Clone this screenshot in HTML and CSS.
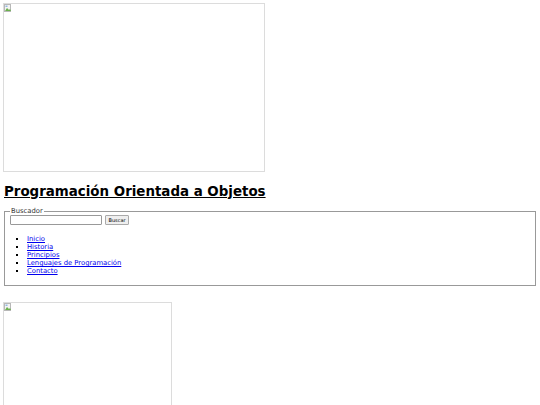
FILE: index.html
```
<!DOCTYPE html>
<html lang="es">
<head>
    <meta charset="UTF-8">
    <meta name="viewport" content="width=device-width, initial-scale=1.0">
    <title>Programación Orientada a Objetos</title>
    <link rel="stylesheet" href="styles.css">
</head>
<body>

<div class="picture banner">
    <svg class="broken" width="8" height="8" viewBox="0 0 8 8">
        <rect x="0.5" y="0.5" width="6" height="7" fill="#f4f4f4" stroke="#b8b8b8"/>
        <path d="M1 7 L3 4 L5 6 L6 5 L7 7 Z" fill="#6ab04c"/>
        <rect x="1.5" y="1.5" width="2" height="1.5" fill="#8fb8e0"/>
    </svg>
</div>

<h1 class="title"><a href="#">Programación Orientada a Objetos</a></h1>

<fieldset class="search">
    <legend>Buscador</legend>
    <div class="search-row">
        <input type="text" class="search-input">
        <button class="search-button">Buscar</button>
    </div>
    <ul class="menu">
        <li><a href="#">Inicio</a></li>
        <li><a href="#">Historia</a></li>
        <li><a href="#">Principios</a></li>
        <li><a href="#">Lenguajes de Programación</a></li>
        <li><a href="#">Contacto</a></li>
    </ul>
</fieldset>

<div class="picture photo">
    <svg class="broken" width="8" height="8" viewBox="0 0 8 8">
        <rect x="0.5" y="0.5" width="6" height="7" fill="#f4f4f4" stroke="#b8b8b8"/>
        <path d="M1 7 L3 4 L5 6 L6 5 L7 7 Z" fill="#6ab04c"/>
        <rect x="1.5" y="1.5" width="2" height="1.5" fill="#8fb8e0"/>
    </svg>
</div>

</body>
</html>
```

FILE: styles.css
```
body {
    margin: 3px;
    font-family: "DejaVu Sans", Verdana, sans-serif;
    font-size: 6.8px;
    background-color: #ffffff;
    color: #000000;
}
.picture {
    box-sizing: border-box;
    border: 1px solid #dcdcdc;
    padding: 0;
}
.broken {
    display: block;
}
.banner {
    width: 262px;
    height: 169px;
}
.photo {
    width: 169px;
    height: 140px;
    margin-top: 16px;
}
.title {
    font-size: 13.4px;
    margin: 11px 0 6px 1px;
    line-height: 18px;
}
.title a {
    color: #000000;
}
.search {
    margin: 0 1px;
    padding: 0 5px 10px 5px;
    border: 1px solid #999999;
}
.search legend {
    padding: 0 1px;
    color: #333333;
}
.search-row {
    display: flex;
    gap: 3px;
    align-items: center;
}
.search-input {
    box-sizing: border-box;
    width: 92px;
    height: 10px;
    border: 1px solid #999999;
    border-radius: 1px;
    padding: 0;
    margin: 0;
}
.search-button {
    box-sizing: border-box;
    width: 24px;
    height: 10px;
    font-family: "DejaVu Sans", sans-serif;
    font-size: 5px;
    padding: 0;
    margin: 0;
    border: 1px solid #aaaaaa;
    border-radius: 1px;
    background-color: #efefef;
    color: #000000;
}
.menu {
    margin: 10px 0 0 0;
    padding-left: 17px;
    list-style: square;
    line-height: 8px;
}
.menu a {
    color: #0000ee;
}
```
